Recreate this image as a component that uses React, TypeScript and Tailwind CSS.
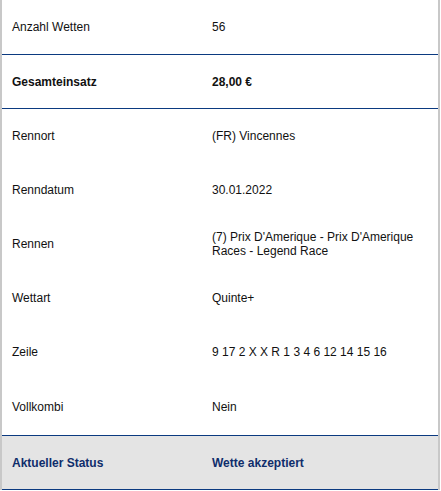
import React from 'react';

interface Row {
  label: string;
  value: string;
  height: string;
}

const detailRows: Row[] = [
  { label: 'Rennort', value: '(FR) Vincennes', height: 'h-[54px]' },
  { label: 'Renndatum', value: '30.01.2022', height: 'h-[54px]' },
  { label: 'Rennen', value: "(7) Prix D'Amerique - Prix D'Amerique Races - Legend Race", height: 'h-[54px]' },
  { label: 'Wettart', value: 'Quinte+', height: 'h-[54px]' },
  { label: 'Zeile', value: '9 17 2 X X R 1 3 4 6 12 14 15 16', height: 'h-[54px]' },
  { label: 'Vollkombi', value: 'Nein', height: 'h-[56px]' },
];

const App: React.FC = () => {
  return (
    <div className="w-[441px] bg-white font-['Liberation_Sans',Arial,sans-serif] text-[12px] leading-[14px] text-[#111]">
      <div className="w-[440px] border-l-2 border-r-2 border-[#c8c8c8]">
        {/* Summary */}
        <div className="flex h-[55px] items-center border-b border-[#0b3a80]">
          <div className="w-[210px] pl-[10px]">Anzahl Wetten</div>
          <div className="flex-1 pr-3">56</div>
        </div>
        <div className="flex h-[54px] items-center border-b border-[#0b3a80] font-bold">
          <div className="w-[210px] pl-[10px]">Gesamteinsatz</div>
          <div className="flex-1 pr-3">28,00 €</div>
        </div>

        {/* Details */}
        <div className="border-b border-[#0b3a80]">
          {detailRows.map((row) => (
            <div key={row.label} className={`flex items-center ${row.height}`}>
              <div className="w-[210px] pl-[10px]">{row.label}</div>
              <div className="flex-1 pr-3">{row.value}</div>
            </div>
          ))}
        </div>

        {/* Status */}
        <div className="flex h-[54px] items-center border-b border-[#0b3a80] bg-[#e4e4e4] font-bold text-[#0f2d6b]">
          <div className="w-[210px] pl-[10px]">Aktueller Status</div>
          <div className="flex-1 pr-3">Wette akzeptiert</div>
        </div>
      </div>
    </div>
  );
};

export default App;
